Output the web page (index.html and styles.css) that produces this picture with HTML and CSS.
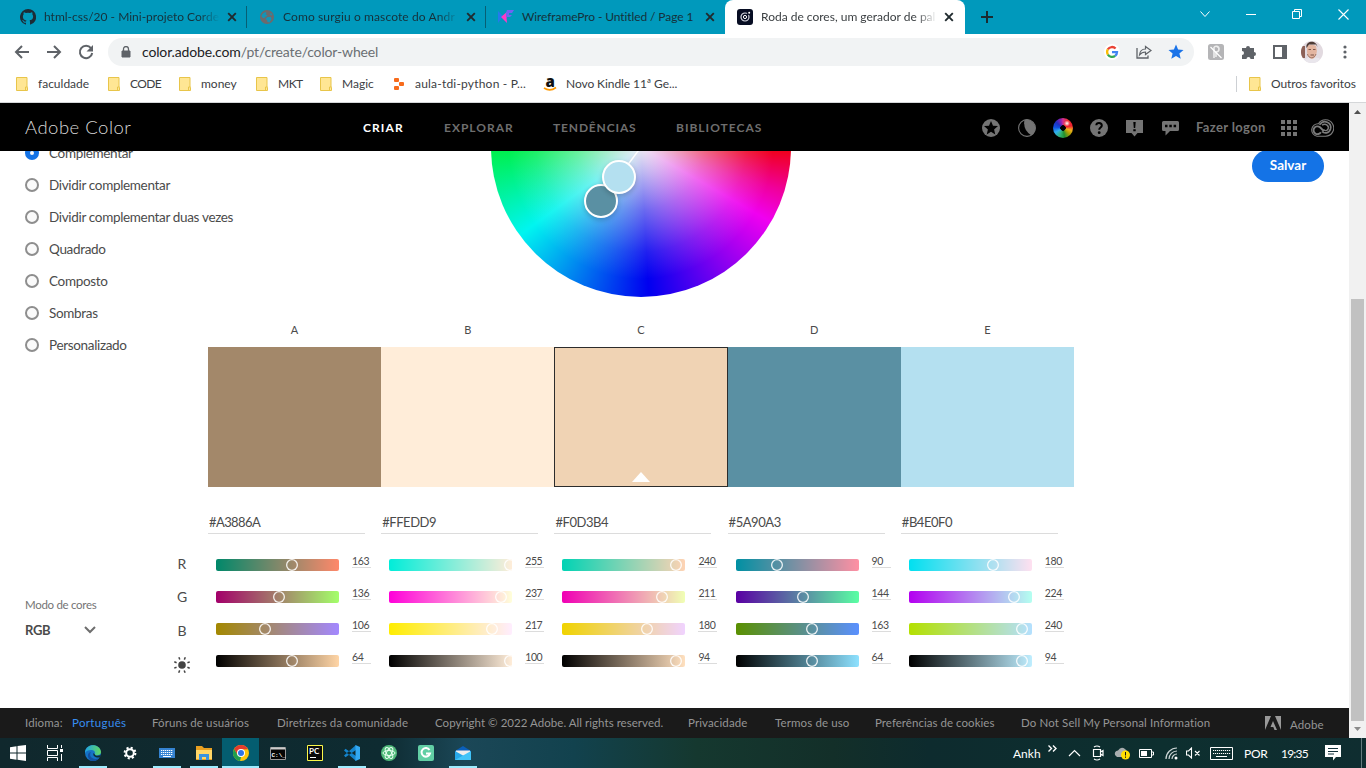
FILE: index.html
```html
<!DOCTYPE html>
<html lang="pt">
<head>
<meta charset="utf-8">
<title>Roda de cores, um gerador de paletas</title>
<link rel="stylesheet" href="styles.css">
</head>
<body>
<svg class="defs" width="0" height="0">
  <symbol id="folder" viewBox="0 0 12 14"><path d="M.5.5h10.500v9.500l.5.5v3h-11z" fill="#ffe694" stroke="#e8c54a"/><path d="M9.500 13.500v-3.500h2" fill="none" stroke="#e8c54a"/></symbol>
  <symbol id="x" viewBox="0 0 10 10"><path d="M1.200 1.200l7.600 7.600M8.800 1.200l-7.600 7.600" stroke="currentColor" stroke-width="1.900"/></symbol>
</svg>

<div class="tabs">
  <div class="tab"><svg width="16" height="16" viewBox="0 0 16 16"><path fill="#1d2b36" d="M8 0a8 8 0 0 0-2.500 15.600c.4.1.5-.2.5-.4v-1.500c-2.200.5-2.700-1-2.700-1-.4-.9-.9-1.200-.9-1.200-.7-.5.1-.5.1-.5.800.1 1.200.8 1.200.8.7 1.200 1.900.9 2.300.7.100-.5.300-.9.5-1.100C4.700 11.200 2.900 10.500 2.900 7.500c0-.9.300-1.600.8-2.200-.1-.2-.4-1 .1-2.100 0 0 .7-.2 2.200.8a7.700 7.700 0 0 1 4 0c1.500-1 2.200-.8 2.200-.8.4 1.100.2 1.900.1 2.100.5.6.8 1.300.8 2.200 0 3-1.900 3.700-3.600 3.900.3.200.5.7.5 1.500v2.300c0 .2.100.5.6.4A8 8 0 0 0 8 0z"/></svg><span class="t t1">html-css/20 - Mini-projeto Corde</span><svg class="cl" width="10" height="10"><use href="#x"/></svg></div>
  <div class="tab"><svg width="16" height="16" viewBox="0 0 16 16"><circle cx="8" cy="8" r="7" fill="#6d6a6c"/><path fill="#1295b8" d="M2.500 7.500c0-2 2-4 4-4.500l1 1-1 1.500 2 .5-1 1.500-2 .5.500 1h-2zM8.500 8l3.500 0 .5 2-2 3.500-2-.5-.5-2-1.500-1zM11.500 3.500l2 2.500-2 .5z"/></svg><span class="t t2">Como surgiu o mascote do Andr</span><svg class="cl" width="10" height="10"><use href="#x"/></svg></div>
  <div class="tab last"><svg width="16" height="16" viewBox="0 0 16 16"><path fill="#2479ed" d="M0 2l5 5-5 7z"/><path fill="#ff39c6" d="M3 8l7-6v5L8.500 8.500 9 14z"/><path fill="#7063f3" d="M9 1h7l-2 3h-3v2h3l-2 2H8V4z"/></svg><span class="t t3">WireframePro - Untitled / Page 1</span><svg class="cl" width="10" height="10"><use href="#x"/></svg></div>
  <div class="tab active"><svg width="16" height="16" viewBox="0 0 16 16"><rect width="16" height="16" rx="3" fill="#070d23"/><circle cx="8" cy="8" r="4" fill="none" stroke="#dadbe4" stroke-width="1.200"/><circle cx="8" cy="8" r="1.600" fill="none" stroke="#fff"/><path d="M10 6l2-2" stroke="#070d23" stroke-width="2"/><circle cx="12.200" cy="3.800" r="1" fill="#fff"/></svg><span class="t t4">Roda de cores, um gerador de pal</span><svg class="cl" width="10" height="10"><use href="#x"/></svg></div>
  <svg class="plus" width="12" height="12"><path d="M6 0v12M0 6h12" stroke="#1a2b30" stroke-width="2"/></svg>
  <div class="win">
    <svg width="10" height="8"><path d="M.5 1.500l4.500 5 4.500-5" fill="none" stroke="#fff"/></svg>
    <svg width="10" height="10"><path d="M0 5.500h10" stroke="#fff"/></svg>
    <svg width="10" height="10"><path d="M.5 2.500h7v7h-7zM2.500 2.500v-2h7v7h-2" fill="none" stroke="#fff"/></svg>
    <svg width="11" height="11"><path d="M.5.5l10 10M10.500.5l-10 10" stroke="#fff" stroke-width="1.100"/></svg>
  </div>
</div>

<div class="toolbar">
  <svg width="16" height="16" viewBox="0 0 16 16"><path d="M15 8H2M8 2L2 8l6 6" fill="none" stroke="#5f6368" stroke-width="2"/></svg>
  <svg width="16" height="16" viewBox="0 0 16 16"><path d="M1 8h13M8 2l6 6-6 6" fill="none" stroke="#5f6368" stroke-width="2"/></svg>
  <svg width="16" height="16" viewBox="0 0 16 16"><path d="M13 4.200A6.200 6.200 0 1 0 14.200 9" fill="none" stroke="#5f6368" stroke-width="2"/><path d="M15 1v6.500H8.500z" fill="#5f6368"/></svg>
  <div class="omni">
    <svg width="10" height="12"><path d="M1 5h8v6H1z" fill="#5f6368" stroke="#5f6368"/><path d="M2.500 5V3a2.500 2.500 0 0 1 5 0v2" fill="none" stroke="#5f6368" stroke-width="1.300"/></svg>
    <span class="url">color.adobe.com<i>/pt/create/color-wheel</i></span>
    <svg width="16" height="16" viewBox="0 0 16 16"><circle cx="8" cy="8" r="8" fill="#fff"/><g fill="none" stroke-width="2.300"><path d="M3.800 5.400A5 5 0 0 1 11.600 4.500" stroke="#ea4335"/><path d="M3.900 10.600A5 5 0 0 1 3.800 5.400" stroke="#fbbc05"/><path d="M11.200 11.900A5 5 0 0 1 3.900 10.600" stroke="#34a853"/><path d="M8 8.200h5A5 5 0 0 1 11.200 11.900" stroke="#4285f4"/></g></svg>
    <svg width="16" height="14" viewBox="0 0 16 14"><path d="M1 3v10h11v-2.500" fill="none" stroke="#5f6368" stroke-width="1.300"/><path d="M9.500 1.500L15 5.500l-5.500 4V7C6.500 7 5 8 3.500 10c.3-3 2-6 6-6z" fill="none" stroke="#5f6368" stroke-width="1.200"/></svg>
    <svg width="16" height="16" viewBox="0 0 16 16"><path d="M8 .5l2.100 4.900 5.400.5-4.100 3.600 1.300 5.300L8 12l-4.700 2.800 1.300-5.300L.5 5.900l5.400-.5z" fill="#1a73e8"/></svg>
  </div>
  <svg width="16" height="16" viewBox="0 0 16 16"><rect width="16" height="16" rx="2.500" fill="#b5b5b7"/><path d="M6 14V3.500C7 1.500 11 2 11 5S9 8 8 8v5" fill="none" stroke="#eee" stroke-width="1.600"/><path d="M2.500 3l11 11" stroke="#fff" stroke-width="1.200"/></svg>
  <svg width="16" height="16" viewBox="0 0 16 16"><path d="M1 4h4a2 2 0 1 1 4 0h4v4a2 2 0 1 1 0 4v3H9.500a2 2 0 0 0-4 0H1v-4a2 2 0 0 0 0-4z" fill="#5f6368"/></svg>
  <svg width="14" height="14"><path d="M1 1h12v12H1z" fill="#fff" stroke="#5f6368" stroke-width="2"/><path d="M9 0h5v14H9z" fill="#5f6368"/></svg>
  <svg width="22" height="22" viewBox="0 0 22 22"><clipPath id="av"><circle cx="11" cy="11" r="11"/></clipPath><g clip-path="url(#av)"><path fill="#e2dae0" d="M0 0h22v22H0z"/><path fill="#8c6158" d="M0 5h4v12H0z"/><path fill="#e9e6ec" d="M3 19l5-3 10 1 3 5H2z"/><path fill="#e3b5a0" d="M6 5q4-3 9 0l1 5q-1 7-5 8-4-1-5-7z"/><path fill="#4d3b35" d="M5.500 7C4 0 15-2 16.500 6l-1.500-2.500-7 0z"/><path d="M7.500 8.500h2.500M12 8.500h2.500M9.500 14h3.500" stroke="#7b5548"/><path d="M6.500 13c1 5 7 5 8.500 0" fill="none" stroke="#a07462"/></g></svg>
  <svg width="4" height="14"><g fill="#5f6368"><circle cx="2" cy="2" r="1.600"/><circle cx="2" cy="7" r="1.600"/><circle cx="2" cy="12" r="1.600"/></g></svg>
</div>

<div class="marks">
  <svg width="12" height="14"><use href="#folder"/></svg><span>faculdade</span>
  <svg width="12" height="14"><use href="#folder"/></svg><span class="m2">CODE</span>
  <svg width="12" height="14"><use href="#folder"/></svg><span>money</span>
  <svg width="12" height="14"><use href="#folder"/></svg><span class="m4">MKT</span>
  <svg width="12" height="14"><use href="#folder"/></svg><span>Magic</span>
  <svg width="12" height="14"><g fill="#f76b1c"><rect x="1" y="1" width="5" height="4" rx="1"/><rect x="6" y="5" width="5" height="4" rx="1"/><rect x="1" y="9" width="5" height="4" rx="1"/></g></svg><span class="m6">aula-tdi-python - P...</span>
  <svg class="amz" width="14" height="16"><text x="2.500" y="10.500" font-family="Open Sans" font-size="15" font-weight="800" fill="#111">a</text><path d="M1 12q6 4 12-.5" fill="none" stroke="#f90" stroke-width="1.600"/></svg><span class="m7">Novo Kindle 11ª Ge...</span>
  <b></b>
  <svg width="12" height="14"><use href="#folder"/></svg><span class="m8">Outros favoritos</span>
</div>

<div class="view">
 <div class="page">
  <header>
    <h1>Adobe Color</h1>
    <a class="on n1">CRIAR</a><a class="n2">EXPLORAR</a><a class="n3">TENDÊNCIAS</a><a class="n4">BIBLIOTECAS</a>
    <svg width="18" height="18" viewBox="0 0 18 18"><circle cx="9" cy="9" r="9" fill="#747474"/><path d="M9 2l2 4.700 5 .4-3.900 3.300 1.200 5L9 12.700l-4.300 2.700 1.200-5L2 7.100l5-.4z"/></svg>
    <svg width="18" height="18" viewBox="0 0 18 18"><circle cx="9" cy="9" r="8.400" fill="none" stroke="#747474" stroke-width="1.100"/><path d="M6.500.700A8.800 8.800 0 0 1 13.500 16.500Q4.500 11 6.500.700z" fill="#747474"/></svg>
    <div class="mini"></div>
    <svg width="18" height="18" viewBox="0 0 18 18"><circle cx="9" cy="9" r="9" fill="#747474"/><path d="M6.300 6.200C6.500 3.300 11.800 3.300 11.800 6.500c0 2-2.600 2-2.600 4.300" fill="none" stroke="#000" stroke-width="2"/><circle cx="9.200" cy="13.700" r="1.400"/></svg>
    <svg width="17" height="18" viewBox="0 0 17 18"><path d="M0 1h17v13h-5.500l-3 3.500-3-3.500H0z" fill="#747474"/><path d="M7.300 3h2.400l-.5 6H7.800zM7.300 10.300h2.400v2H7.300z"/></svg>
    <svg width="17" height="16" viewBox="0 0 17 16"><path d="M1.500 1h14q1.500 0 1.500 1.500v7q0 1.500-1.500 1.500H8l-4.500 4.500V11h-2Q0 11 0 9.500v-7Q0 1 1.500 1z" fill="#747474"/><path d="M3 4.700h2.500v2.500H3zM7.300 4.700h2.500v2.500H7.300zM11.600 4.700h2.500v2.500h-2.500z"/></svg>
    <span class="login">Fazer logon</span>
    <svg width="16" height="16"><path d="M0 2h16M0 8h16M0 14h16" stroke="#747474" stroke-width="4" stroke-dasharray="4 2"/></svg>
    <svg width="24" height="18" viewBox="0 0 24 18"><g fill="none" stroke="#7c7c7c"><path d="M7 17.200h8.500a8.200 8.200 0 1 0-7-12.500A6.300 6.300 0 0 0 7 17.200z" stroke-width="1.100"/><path d="M10.800 13.200A3.900 3.900 0 1 1 10 8.300L14 12.200" stroke-width="1.900"/><path d="M9.500 5.800C14-.5 22 4 20.500 10c-1.500 5-6.500 4.500-8.500 2.500" stroke-width="1.700"/><path d="M12 6.200c4-2.500 7.500 1 6 4-1 1.800-3 1.800-4.500.3" stroke-width="1.400"/></g></svg>
  </header>

  <main>
    <aside>
      <ul>
        <li><i class="sel"></i>Complementar</li>
        <li><i></i>Dividir complementar</li>
        <li><i></i>Dividir complementar duas vezes</li>
        <li><i></i>Quadrado</li>
        <li><i></i>Composto</li>
        <li><i></i>Sombras</li>
        <li><i></i>Personalizado</li>
      </ul>
      <div class="mode"><label>Modo de cores</label><p>RGB<svg width="12" height="8"><path d="M1 1l5 5 5-5" fill="none" stroke="#6e6e6e" stroke-width="2"/></svg></p></div>
    </aside>
    <div class="rows"><span>R</span><span>G</span><span>B</span>
      <svg width="18" height="18" viewBox="-9 -9 18 18"><circle r="3.800" fill="#444"/><g stroke="#444" stroke-width="1.500"><path id="ray" d="M2.300-5.400L3.300-7.700"/><use href="#ray" transform="rotate(45)"/><use href="#ray" transform="rotate(90)"/><use href="#ray" transform="rotate(135)"/><use href="#ray" transform="rotate(180)"/><use href="#ray" transform="rotate(225)"/><use href="#ray" transform="rotate(270)"/><use href="#ray" transform="rotate(315)"/></g></svg>
    </div>
    <section>
      <div class="clip"><div class="wheel">
        <svg class="ln" width="300" height="300"><path d="M150 150L110 204" stroke="#fff" stroke-width="1.500"/></svg>
        <i class="dot d"></i><i class="dot e"></i>
      </div></div>
      <div class="letters"><span>A</span><span>B</span><span>C</span><span>D</span><span>E</span></div>
      <div class="swatches"><div class="sa"></div><div class="sb"></div><div class="sc"><i></i></div><div class="sd"></div><div class="se"></div></div>
      <div class="cols">
        <div class="col"><p>#A3886A</p>
          <div class="s" style="--f:#00886a;--t:#ff886a;--x:76px"><i></i></div><span>163</span>
          <div class="s" style="--f:#a3006a;--t:#a3ff6a;--x:63px"><i></i></div><span>136</span>
          <div class="s" style="--f:#a38800;--t:#a388ff;--x:49px"><i></i></div><span>106</span>
          <div class="s" style="--f:#000;--t:#ffd5a6;--x:76px"><i></i></div><span>64</span></div>
        <div class="col"><p>#FFEDD9</p>
          <div class="s" style="--f:#00edd9;--t:#ffedd9;--x:121px"><i></i></div><span>255</span>
          <div class="s" style="--f:#ff00d9;--t:#ffffd9;--x:112px"><i></i></div><span>237</span>
          <div class="s" style="--f:#ffed00;--t:#ffedff;--x:103px"><i></i></div><span>217</span>
          <div class="s" style="--f:#000;--t:#ffedd9;--x:121px"><i></i></div><span>100</span></div>
        <div class="col"><p>#F0D3B4</p>
          <div class="s" style="--f:#00d3b4;--t:#ffd3b4;--x:114px"><i></i></div><span>240</span>
          <div class="s" style="--f:#f000b4;--t:#f0ffb4;--x:100px"><i></i></div><span>211</span>
          <div class="s" style="--f:#f0d300;--t:#f0d3ff;--x:85px"><i></i></div><span>180</span>
          <div class="s" style="--f:#000;--t:#ffe0bf;--x:114px"><i></i></div><span>94</span></div>
        <div class="col"><p>#5A90A3</p>
          <div class="s" style="--f:#0090a3;--t:#ff90a3;--x:41px"><i></i></div><span>90</span>
          <div class="s" style="--f:#5a00a3;--t:#5affa3;--x:67px"><i></i></div><span>144</span>
          <div class="s" style="--f:#5a9000;--t:#5a90ff;--x:76px"><i></i></div><span>163</span>
          <div class="s" style="--f:#000;--t:#8de1ff;--x:76px"><i></i></div><span>64</span></div>
        <div class="col"><p>#B4E0F0</p>
          <div class="s" style="--f:#00e0f0;--t:#ffe0f0;--x:84px"><i></i></div><span>180</span>
          <div class="s" style="--f:#b400f0;--t:#b4fff0;--x:105px"><i></i></div><span>224</span>
          <div class="s" style="--f:#b4e000;--t:#b4e0ff;--x:113px"><i></i></div><span>240</span>
          <div class="s" style="--f:#000;--t:#bfeeff;--x:113px"><i></i></div><span>94</span></div>
      </div>
    </section>
    <div class="side"><button>Salvar</button></div>
  </main>

  <footer>
    <span>Idioma:</span><span class="pt">Português</span><span>Fóruns de usuários</span><span>Diretrizes da comunidade</span><span class="cp">Copyright © 2022 Adobe. All rights reserved.</span><span>Privacidade</span><span>Termos de uso</span><span class="cp">Preferências de cookies</span><span>Do Not Sell My Personal Information</span>
    <svg width="16" height="14"><path d="M0 0h6L0 14zM10 0h6v14zM8 5l4 9H9.500L8.300 11H5.500z" fill="#999"/></svg><span class="ad">Adobe</span>
  </footer>
 </div>
 <div class="scroll"><svg width="17" height="17"><path d="M5 11l3.500-4 3.500 4z" fill="#505050"/></svg><i></i><svg width="17" height="17"><path d="M5 6l3.500 4L12 6z" fill="#8a8a8a"/></svg></div>
</div>

<div class="task">
  <div><svg width="16" height="16"><path d="M0 2.300L6.500 1.300V7.500H0zM7.500 1.100L16 0v7.500H7.500zM0 8.500h6.500v6.200L0 13.700zM7.500 8.500H16V16l-8.500-1.200z" fill="#fff"/></svg></div>
  <div><svg width="16" height="16"><path d="M.5 0v3.500h10V0M.5 16v-3.500h10V16M.5 5.500h10v5H.5zM14.500 0v3M14.500 9v7" fill="none" stroke="#fff"/><path d="M13 4h3v3h-3z" fill="#fff"/></svg></div>
  <div class="open"><svg width="16" height="16" viewBox="0 0 16 16"><defs><linearGradient id="ed"><stop stop-color="#1fa4e6"/><stop offset="1" stop-color="#62d85f"/></linearGradient></defs><circle cx="8" cy="8" r="8" fill="#1572c6"/><path d="M0 7C1-2 15-2 16 7c0 4-6 4-6.500 2 1-1 .5-4-3-4C3 5 1 6 0 8z" fill="url(#ed)"/><path d="M6 7c-3 4 2 9 8 6-2 3-6 4-9 2-3-3-3-7 1-8z" fill="#1350a0"/><path d="M9.500 9c1 2.500 4 2 6.500 1l-1.500 2.500c-4 .5-7-1.500-6-4.500z" fill="#0f2c33"/></svg></div>
  <div><svg width="14" height="14" viewBox="-7 -7 14 14"><circle r="3.800" fill="none" stroke="#fff" stroke-width="2"/><circle r="5.400" fill="none" stroke="#fff" stroke-width="2" stroke-dasharray="2.100 2.140"/></svg></div>
  <div class="open"><svg width="16" height="12"><path d="M0 1h16v10H0z" fill="#3583d1"/><path d="M2 3.500h12M2 5.500h12M2 7.500h12" stroke="#fff" stroke-dasharray="1.300 .7"/><path d="M4 9.500h8" stroke="#fff"/></svg></div>
  <div class="open"><svg width="16" height="14"><path d="M0 0h6l2 2h8v12H0z" fill="#e9a021"/><path d="M0 4h16v9H0z" fill="#ffd667"/><path d="M3 14V8h10v6h-3v-3H6v3z" fill="#3a93df"/></svg></div>
  <div class="open cur"><svg width="16" height="16" viewBox="0 0 16 16"><circle cx="8" cy="8" r="8" fill="#fdc70c"/><path d="M1.100 4A8 8 0 0 1 15 4.200L8 4.500 4.600 10z" fill="#e33b2e"/><path d="M1.100 4l3.500 6L8 12l-1 4A8 8 0 0 1 1.100 4z" fill="#1e9e4f"/><circle cx="8" cy="8" r="4" fill="#fff"/><circle cx="8" cy="8" r="3" fill="#2d74e7"/></svg></div>
  <div><svg width="16" height="13"><path d="M.5.5h15v12H.5z" fill="#050505" stroke="#999"/><path d="M1 1.500h14" stroke="#ccc" stroke-width="2"/><text x="1.500" y="10" font-size="6" font-family="Liberation Mono" font-weight="bold" fill="#fff">C:\_</text></svg></div>
  <div><svg width="16" height="16"><path d="M.5.5h15v15H.5z" fill="#0a0a0a" stroke="#fcf84a"/><text x="2" y="9" font-size="8" font-family="Lato" font-weight="bold" fill="#fff">PC</text><path d="M3 12.500h6" stroke="#fff"/></svg></div>
  <div class="open"><svg width="16" height="16"><path d="M12 0L0 10.500 1.500 12.200 12 5zM12 16L0 5.500 1.500 3.800 12 11z" fill="#1484cc"/><path d="M11.500 0L16 2v12l-4.500 2z" fill="#32a8f1"/></svg></div>
  <div><svg width="16" height="16" viewBox="-8 -8 16 16"><circle r="8" fill="#4fb979"/><g fill="none" stroke="#e7fff0"><ellipse rx="6" ry="2.500"/><ellipse rx="6" ry="2.500" transform="rotate(60)"/><ellipse rx="6" ry="2.500" transform="rotate(120)"/></g></svg></div>
  <div><svg width="16" height="16"><rect width="16" height="16" rx="2" fill="#62cfa5"/><path d="M11.500 5A4.300 4.300 0 1 0 12 8.500H8" fill="none" stroke="#fff" stroke-width="2"/></svg></div>
  <div class="open"><svg width="16" height="16"><path d="M0 6l8-5 8 5v9H0z" fill="#0b5fb9"/><path d="M1 5.500h14V9l-7 3-7-3z" fill="#eee"/><path d="M0 6l16 9H0z" fill="#27a8ea"/><path d="M16 6v9H0z" fill="#41c4f8"/></svg></div>
  <div class="tray">
    <span>Ankh</span>
    <svg class="up" width="9" height="7"><path d="M.5.5l3 3-3 3M5 .5l3 3-3 3" fill="none" stroke="#fff" stroke-width="1.400"/></svg>
    <svg width="13" height="8"><path d="M1 7l5.500-5.500L12 7" fill="none" stroke="#fff" stroke-width="1.200"/></svg>
    <svg width="13" height="16"><path d="M1.500 4.500h7v7h-7zM8.500 7l2.500-1.500v5L8.500 9M2 2q3-2 6 0M2 14q3 2 6 0" fill="none" stroke="#fff" stroke-width="1.200"/></svg>
    <svg width="17" height="14"><path d="M1 9Q0 5 4 4.500 7 0 11 3l4 4-3 4H3z" fill="#a8adae"/><circle cx="11.500" cy="9" r="4.500" fill="#ffdf00"/><path d="M11.500 6v3.500M11.500 10.500v1.300" stroke="#111"/></svg>
    <svg width="15" height="9"><path d="M.5.500h12v8H.5zM13 3h1.500v3H13" fill="none" stroke="#fff"/><path d="M2 2h6v5H2z" fill="#fff"/></svg>
    <svg width="13" height="13"><g fill="none" stroke="#ccd5d5" stroke-width="1.200"><path d="M1 12A11 11 0 0 1 12 1M4 12A8 8 0 0 1 12 4M7 12a5 5 0 0 1 5-5"/></g><circle cx="11" cy="11" r="1.500" fill="#fff"/></svg>
    <svg width="15" height="12"><path d="M.5 4h2l3-3v10l-3-3h-2zM9 4l4.500 4.500M13.500 4L9 8.500" fill="none" stroke="#fff" stroke-width="1.100"/></svg>
    <svg width="23" height="13"><path d="M.5.500h22v12H.5z" fill="none" stroke="#fff"/><path d="M3 3.500h18M3 6.500h18" stroke="#fff" stroke-dasharray="1.200 .8"/><path d="M6 9.500h11" stroke="#fff"/></svg>
    <span class="por">POR</span><span class="time">19:35</span>
    <svg width="16" height="16"><path d="M0 0h16v12h-5l-3 3.500V12H0z" fill="#fff"/><path d="M3 3.500h10M3 6.500h10M3 9h6" stroke="#12313a"/></svg>
    <b></b>
  </div>
</div>
</body>
</html>
```

FILE: styles.css
```css
* { box-sizing: border-box; margin: 0; padding: 0; }
body { width: 1366px; height: 768px; overflow: hidden; display: flex; flex-direction: column; background: #fff; font: 12px Lato, "Open Sans", sans-serif; white-space: nowrap; }
svg { display: block; flex: none; }
.defs { position: absolute; }

.tabs { height: 34px; flex: none; background: #0099bc; display: flex; padding-left: 8px; color: #15313b; }
.tab { width: 239px; display: flex; align-items: center; padding-left: 12px; border-right: 1px solid transparent; border-image: linear-gradient(transparent 20%, #075f74 20%, #075f74 80%, transparent 80%) 1; }
.tab .t { width: 176px; margin: 0 8px; line-height: 20px; -webkit-mask-image: linear-gradient(90deg, #000 155px, transparent 176px); }
.tab .t2 { letter-spacing: .12px; }
.tab .t3 { letter-spacing: -.1px; -webkit-mask-image: none; }
.tab .cl { margin-left: -1px; color: #202a2e; }
.tab.last { width: 231px; margin-right: 0; border-color: transparent; border-image: none; border-bottom-right-radius: 8px; background: #0099bc; box-shadow: 8px 8px 0 #fff; clip-path: inset(0 -8px 0 0); padding-right: 0; margin-right: 8px; }
.tab.last .t { width: 176px; }
.tab.active { width: 240px; background: #fff; border: 0; border-radius: 8px 8px 0 0; color: #3c4043; }
.tab.last { width: 239px; margin-right: 0; box-shadow: none; clip-path: none; }
.plus { margin: 11px 0 0 16px; }
.win { flex: 1; display: flex; justify-content: flex-end; align-items: center; gap: 36px; padding: 0 17px 6px 0; }

.toolbar { height: 36px; flex: none; display: grid; grid-template-columns: 32px 32px 32px 1096px 36px 29px 34px 30px 36px; padding: 0 0 1px 6px; align-items: center; justify-items: center; }
.omni { width: 1086px; height: 28px; border-radius: 14px; background: #f1f3f4; display: grid; grid-template-columns: 21px 962px 32px 32px 32px; padding-left: 13px; align-items: center; margin-left: 2px; }
.url { font-size: 14px; color: #202124; letter-spacing: -.15px; }
.url i { font-style: normal; color: #6b6f73; }

.marks { height: 33px; flex: none; border-bottom: 1px solid #d5d7d9; display: grid; align-items: center; color: #3c4043; padding: 0 0 5px 16px; grid-template-columns: 22px 70px 22px 49px 22px 55px 22px 42px 22px 51px 22px 128px 23px 670px 13px 22px 90px; }
.marks .m2 { letter-spacing: -.6px; }
.marks .m4 { letter-spacing: -.5px; }
.marks .m6 { letter-spacing: .2px; }
.marks .m7, .marks .m8 { letter-spacing: -.08px; }
.marks b { width: 1px; height: 16px; background: #cdd0d4; }
.amz { overflow: visible; }

.view { height: 635px; flex: none; display: flex; }
.page { width: 1349px; display: flex; flex-direction: column; }
header { height: 48px; flex: none; background: #000; position: relative; z-index: 2; display: grid; align-items: center; padding: 1px 0 0 25px; color: #747474; grid-template-columns: 338px 81px 109px 123px 306px 36px 35px 37px 36px 36px 34px 85px 29px 24px; }
h1 { font-size: 18.500px; font-weight: 300; color: #d8d8d8; letter-spacing: .5px; padding-bottom: 2px; }
header a { font-weight: 700; font-size: 12px; letter-spacing: 1px; color: #6e6e6e; padding-bottom: 1px; }
header a.n1 { color: #fff; letter-spacing: 1.100px; }
header a.n3 { letter-spacing: .85px; }
.mini { width: 20px; height: 20px; border-radius: 50%; background: radial-gradient(circle, #000 2.500px, transparent 3px), radial-gradient(circle at 70% 27%, #fff 0, transparent 3px), conic-gradient(#d03090, #f03030 30deg, #f02030 75deg, #f0b020 105deg, #b0a000 130deg, #209030 170deg, #30b070 200deg, #30b0f0 240deg, #1050e0 275deg, #2030c0 310deg, #9020b0 345deg, #d03090); }
.login { font-size: 13px; font-weight: 700; letter-spacing: .35px; padding-bottom: 1px; }

main { height: 557px; flex: none; overflow: hidden; display: grid; grid-template-columns: 167px 41px 866px 275px; }
aside { padding-left: 25px; display: flex; flex-direction: column; font-size: 13.500px; color: #4b4b4b; }
ul { list-style: none; margin-top: -14px; }
li { height: 32px; display: flex; align-items: center; gap: 10px; letter-spacing: -.33px; }
li i { width: 14px; height: 14px; border-radius: 50%; border: 2px solid #8e8e8e; background: #fafafa; flex: none; }
li i.sel { border: 5px solid #1473e6; }
.mode { margin-top: 236px; }
.mode label { display: block; font-size: 11.500px; letter-spacing: -.3px; line-height: 16px; color: #747474; }
.mode p { display: flex; align-items: center; font-weight: 700; font-size: 13px; letter-spacing: -.3px; line-height: 18px; margin-top: 8px; gap: 34px; }
.rows { padding-top: 397px; display: flex; flex-direction: column; align-items: center; padding-right: 11px; font-size: 14px; color: #4b4b4b; }
.rows span { height: 33.300px; line-height: 32px; }
.rows svg { margin-top: 8px; }
.clip { height: 146px; display: flex; justify-content: center; }
.wheel { width: 300px; height: 300px; margin-top: -154px; border-radius: 50%; position: relative; flex: none; background: radial-gradient(circle closest-side, #eeeaf2 0, #eeeaf2c8 17%, #f0f0f070 42%, #f0f0f022 70%, transparent 88%), conic-gradient(#ff0 0, #f80 45deg, #f00010 90deg, #f0009a 107deg, #f000f0 120deg, #8000f0 147deg, #0000f0 177deg, #0080f0 207deg, #00f5f0 234deg, #00f050 268deg, #0f0 300deg, #ff0); }
.ln { position: absolute; left: 0; top: 0; }
.dot { position: absolute; width: 34px; height: 34px; border-radius: 50%; border: 2px solid #fff; box-shadow: 0 2px 5px #0003; }
.d { left: 93px; top: 187px; background: #5a90a3; }
.e { left: 111px; top: 163px; background: #b4e0f0; }
.letters { display: grid; grid-template-columns: repeat(5, 1fr); text-align: center; height: 50px; padding-top: 25px; font-size: 11px; line-height: 16px; color: #4b4b4b; }
.swatches { height: 140px; display: grid; grid-template-columns: repeat(5, 1fr); }
.sa { background: #a3886a; } .sb { background: #ffedd9; } .sd { background: #5a90a3; } .se { background: #b4e0f0; }
.sc { background: #f0d3b4; border: 1px solid #2c2c2c; display: flex; justify-content: center; align-items: flex-end; padding-bottom: 4px; }
.sc i { border: 9px solid transparent; border-top: 0; border-bottom: 10px solid #fff; }
.cols { display: grid; grid-template-columns: repeat(5, 1fr); padding-top: 26px; color: #4b4b4b; }
.col { display: grid; grid-template-columns: 123px 19px; column-gap: 13px; grid-template-rows: 43px repeat(4, 32px); padding-left: 8px; }
.col p { grid-column: 1 / 3; width: 157px; height: 21px; margin-left: -8px; border-bottom: 1px solid #dcdcdc; font-size: 13px; letter-spacing: -.6px; line-height: 19px; padding-left: 1px; }
.col:nth-child(n+2) p { letter-spacing: -.45px; }
.col span { font-size: 10.500px; letter-spacing: -.4px; line-height: 12px; height: 13px; border-bottom: 1px solid #dcdcdc; margin-top: -1px; }
.s { height: 12px; margin-top: 3px; border-radius: 2px; background: linear-gradient(90deg, var(--f), var(--t)); overflow: hidden; }
.s i { display: block; width: 12px; height: 12px; border-radius: 50%; box-shadow: inset 0 0 0 1.300px #fffd; margin-left: calc(var(--x) - 6px); }
.side { padding-left: 178px; }
button { display: block; width: 72px; height: 32px; margin-top: -1px; border: 0; border-radius: 16px; background: #1473e6; color: #fff; font: 700 13.500px Lato, sans-serif; padding-bottom: 2px; }

footer { height: 30px; background: #1a1a1a; color: #959595; display: grid; align-items: center; padding: 0 0 1px 25px; font-size: 11.500px; letter-spacing: .12px; grid-template-columns: 47px 80px 125px 158px 253px 87px 100px 146px 244px 25px 40px; }
footer .cp { letter-spacing: .04px; }
footer .pt { color: #378ef0; letter-spacing: .35px; }
footer .ad { padding-top: 4px; }
.scroll { width: 17px; background: #f1f1f1; display: flex; flex-direction: column; justify-content: space-between; }
.scroll i { width: 13px; height: 422px; margin: 179px 0 0 2px; background: #c1c1c1; }

.task { height: 30px; flex: none; display: flex; background: linear-gradient(90deg, #10282d 0, #0e2b31 28%, #1b4757 34%, #12424e 42%, #15382f 51%, #132f29 61%, #0d2b2e 68%, #0d2f2f 85%, #0f2d30 100%); color: #fff; }
.task > div { width: 37px; display: flex; align-items: center; justify-content: center; }
.task > div:nth-child(1) { width: 36px; }
.task > div:nth-child(2) { margin-right: 1px; }
.task > .open { background: linear-gradient(#9eecff, #9eecff) bottom / 28px 2px no-repeat; }
.task > .cur { background: #045d70; border-bottom: 2px solid #9eecff; padding-top: 2px; }
.task > .tray { flex: 1; display: grid; justify-content: start; grid-template-columns: 35px 20px 24px 22px 25px 26px 21px 24px 34px 37px 44px 36px 2px; padding: 0 0 1px 532px; }
.tray .por { letter-spacing: -.3px; }
.tray .time { letter-spacing: -.8px; }
.up { margin-bottom: 10px; }
.tray b { height: 30px; width: 1px; background: #647b7e; }
```
